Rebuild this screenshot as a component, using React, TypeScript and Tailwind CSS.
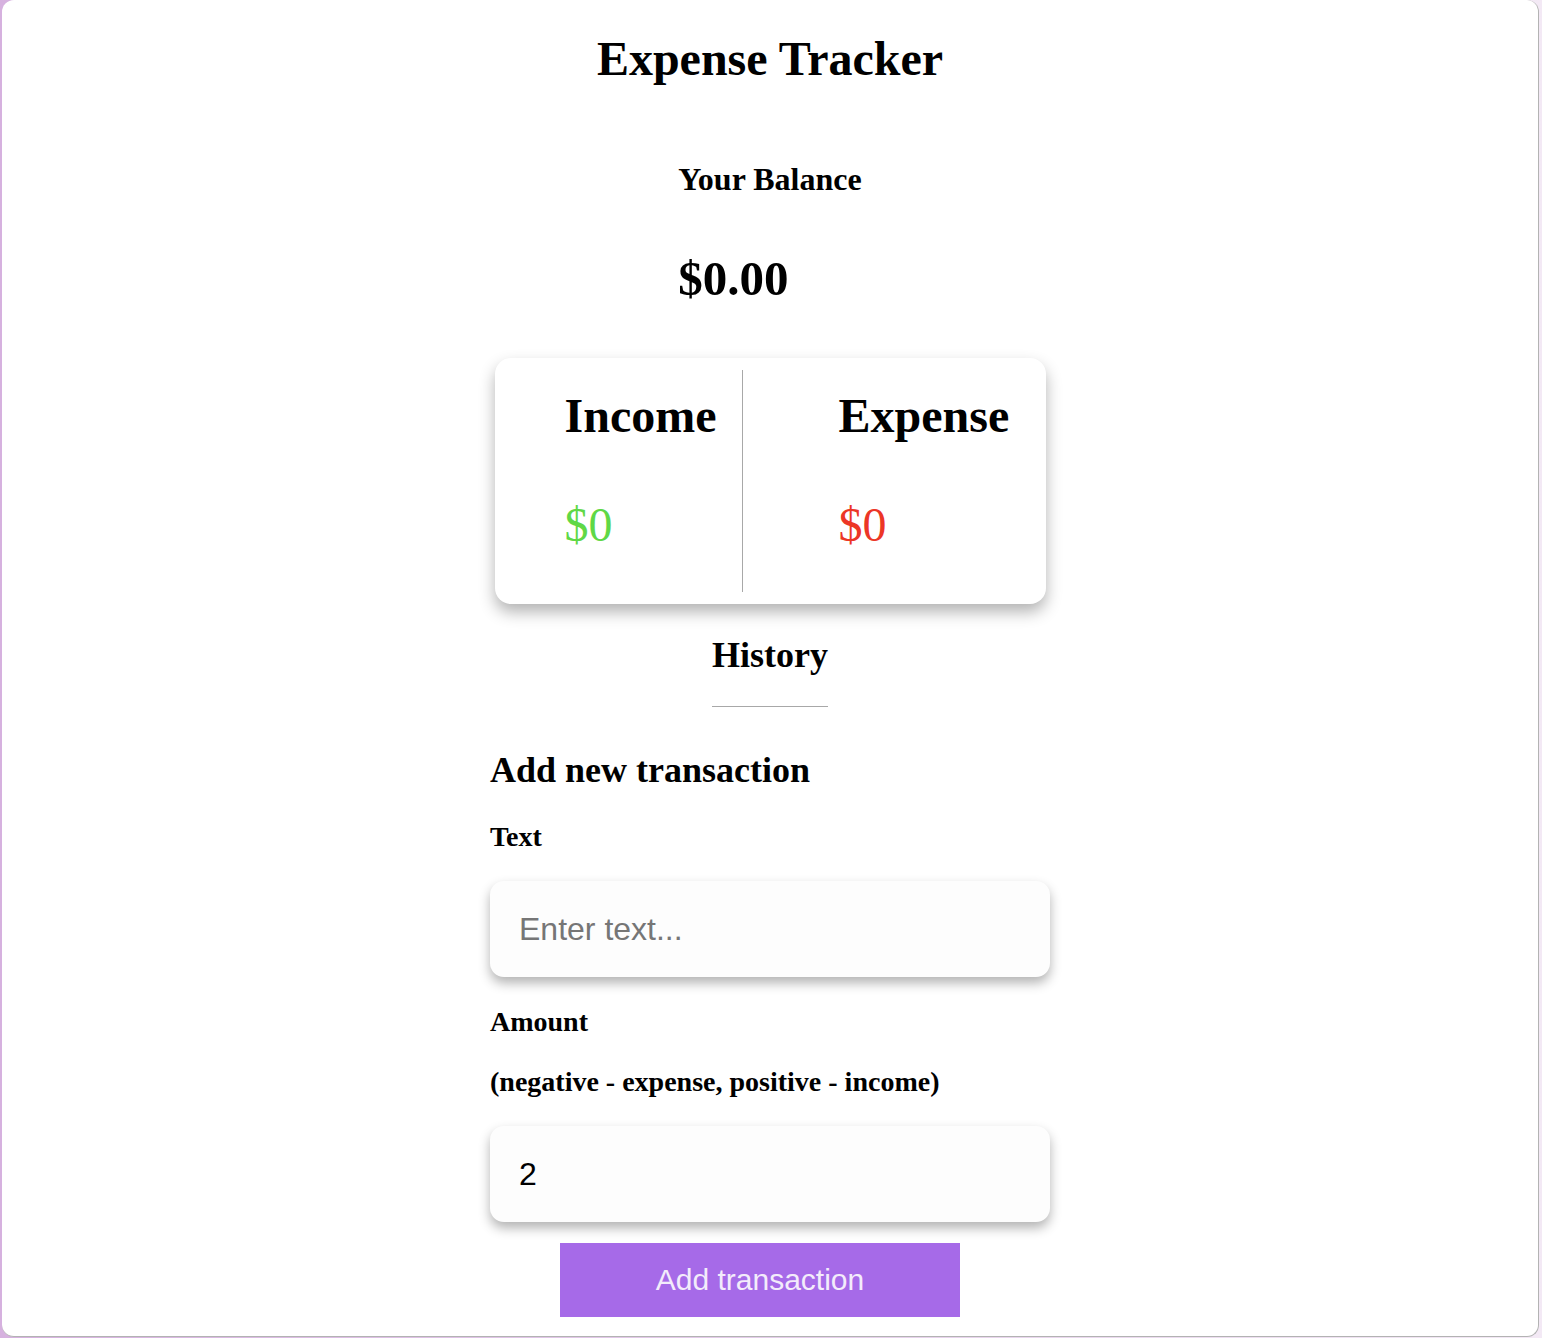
import React from "react";

function App() {
  return (
    <div className="h-[1338px] w-full bg-gradient-to-r from-[#d6b1df] to-[#f3e9f5] pl-[2px] pr-[3px] pb-[1px] font-['Liberation_Serif',serif] text-black">
      <div className="h-full rounded-[12px] border-r border-b border-[#b3b3b3] bg-white flex flex-col items-center">
        <h1 className="mt-[35px] text-[48px] leading-none font-bold">Expense Tracker</h1>

        <div className="mt-[80px] text-left">
          <h4 className="text-[32px] leading-none font-bold">Your Balance</h4>
          <h1 className="mt-[59px] text-[49px] leading-none font-bold">$0.00</h1>
        </div>

        <div className="mt-[55px] w-[551px] h-[246px] rounded-[16px] bg-white shadow-[0_8px_16px_rgba(0,0,0,0.3)] flex py-[12px]">
          <div className="w-[247px] pl-[70px] pt-[22px]">
            <h4 className="text-[48px] leading-none font-bold">Income</h4>
            <p className="mt-[61px] text-[48px] leading-none text-[#5fd846]">$0</p>
          </div>
          <div className="w-px bg-[#a8a8a8]" />
          <div className="pl-[96px] pt-[22px]">
            <h4 className="text-[48px] leading-none font-bold">Expense</h4>
            <p className="mt-[61px] text-[48px] leading-none text-[#ec3626]">$0</p>
          </div>
        </div>

        <div className="mt-[33px] border-b border-[#a8a8a8] pb-[33px]">
          <h3 className="text-[36px] leading-none font-bold">History</h3>
        </div>

        <form className="w-[560px] flex flex-col" onSubmit={(e) => e.preventDefault()}>
          <h3 className="mt-[45px] text-[36px] leading-none font-bold">Add new transaction</h3>
          <label className="mt-[35px] text-[28px] leading-none font-bold">Text</label>
          <input
            type="text"
            placeholder="Enter text..."
            className="mt-[30px] h-[96px] w-full rounded-[14px] bg-[#fdfdfd] pl-[29px] text-[32px] font-['Liberation_Sans',sans-serif] placeholder:text-[#767676] shadow-[0_6px_12px_rgba(0,0,0,0.3)] outline-none"
          />
          <label className="mt-[31px] text-[28px] leading-none font-bold">Amount</label>
          <p className="mt-[32px] text-[28px] leading-none font-bold">(negative - expense, positive - income)</p>
          <input
            type="number"
            defaultValue={2}
            className="mt-[30px] h-[96px] w-full rounded-[14px] bg-[#fdfdfd] pl-[29px] text-[32px] font-['Liberation_Sans',sans-serif] shadow-[0_6px_12px_rgba(0,0,0,0.3)] outline-none [appearance:textfield]"
          />
          <button className="mt-[21px] ml-[70px] h-[74px] w-[400px] bg-[#a66ae8] pb-[2px] text-[30px] text-[#f3ecfb] font-['Liberation_Sans',sans-serif]">
            Add transaction
          </button>
        </form>
      </div>
    </div>
  );
}

export default App;
